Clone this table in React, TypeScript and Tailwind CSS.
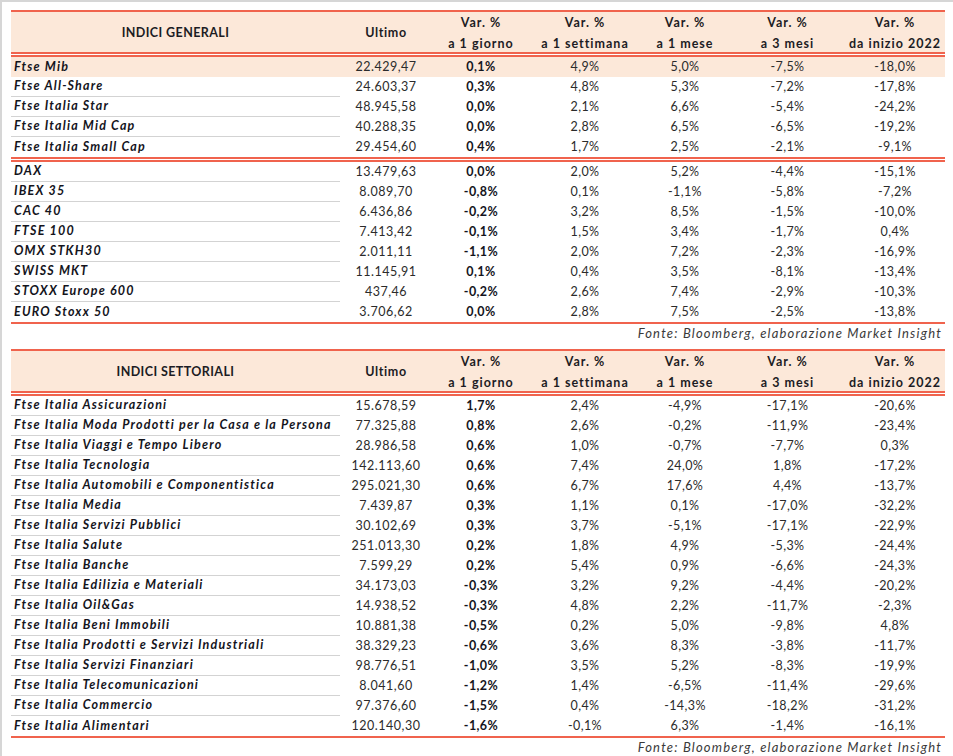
import React from "react";

type Row = [string, string, string, string, string, string, string];

const GENERALI_IT: Row[] = [
  ["Ftse Mib", "22.429,47", "0,1%", "4,9%", "5,0%", "-7,5%", "-18,0%"],
  ["Ftse All-Share", "24.603,37", "0,3%", "4,8%", "5,3%", "-7,2%", "-17,8%"],
  ["Ftse Italia Star", "48.945,58", "0,0%", "2,1%", "6,6%", "-5,4%", "-24,2%"],
  ["Ftse Italia Mid Cap", "40.288,35", "0,0%", "2,8%", "6,5%", "-6,5%", "-19,2%"],
  ["Ftse Italia Small Cap", "29.454,60", "0,4%", "1,7%", "2,5%", "-2,1%", "-9,1%"],
];

const GENERALI_EU: Row[] = [
  ["DAX", "13.479,63", "0,0%", "2,0%", "5,2%", "-4,4%", "-15,1%"],
  ["IBEX 35", "8.089,70", "-0,8%", "0,1%", "-1,1%", "-5,8%", "-7,2%"],
  ["CAC 40", "6.436,86", "-0,2%", "3,2%", "8,5%", "-1,5%", "-10,0%"],
  ["FTSE 100", "7.413,42", "-0,1%", "1,5%", "3,4%", "-1,7%", "0,4%"],
  ["OMX STKH30", "2.011,11", "-1,1%", "2,0%", "7,2%", "-2,3%", "-16,9%"],
  ["SWISS MKT", "11.145,91", "0,1%", "0,4%", "3,5%", "-8,1%", "-13,4%"],
  ["STOXX Europe 600", "437,46", "-0,2%", "2,6%", "7,4%", "-2,9%", "-10,3%"],
  ["EURO Stoxx 50", "3.706,62", "0,0%", "2,8%", "7,5%", "-2,5%", "-13,8%"],
];

const SETTORIALI: Row[] = [
  ["Ftse Italia Assicurazioni", "15.678,59", "1,7%", "2,4%", "-4,9%", "-17,1%", "-20,6%"],
  ["Ftse Italia Moda Prodotti per la Casa e la Persona", "77.325,88", "0,8%", "2,6%", "-0,2%", "-11,9%", "-23,4%"],
  ["Ftse Italia Viaggi e Tempo Libero", "28.986,58", "0,6%", "1,0%", "-0,7%", "-7,7%", "0,3%"],
  ["Ftse Italia Tecnologia", "142.113,60", "0,6%", "7,4%", "24,0%", "1,8%", "-17,2%"],
  ["Ftse Italia Automobili e Componentistica", "295.021,30", "0,6%", "6,7%", "17,6%", "4,4%", "-13,7%"],
  ["Ftse Italia Media", "7.439,87", "0,3%", "1,1%", "0,1%", "-17,0%", "-32,2%"],
  ["Ftse Italia Servizi Pubblici", "30.102,69", "0,3%", "3,7%", "-5,1%", "-17,1%", "-22,9%"],
  ["Ftse Italia Salute", "251.013,30", "0,2%", "1,8%", "4,9%", "-5,3%", "-24,4%"],
  ["Ftse Italia Banche", "7.599,29", "0,2%", "5,4%", "0,9%", "-6,6%", "-24,3%"],
  ["Ftse Italia Edilizia e Materiali", "34.173,03", "-0,3%", "3,2%", "9,2%", "-4,4%", "-20,2%"],
  ["Ftse Italia Oil&Gas", "14.938,52", "-0,3%", "4,8%", "2,2%", "-11,7%", "-2,3%"],
  ["Ftse Italia Beni Immobili", "10.881,38", "-0,5%", "0,2%", "5,0%", "-9,8%", "4,8%"],
  ["Ftse Italia Prodotti e Servizi Industriali", "38.329,23", "-0,6%", "3,6%", "8,3%", "-3,8%", "-11,7%"],
  ["Ftse Italia Servizi Finanziari", "98.776,51", "-1,0%", "3,5%", "5,2%", "-8,3%", "-19,9%"],
  ["Ftse Italia Telecomunicazioni", "8.041,60", "-1,2%", "1,4%", "-6,5%", "-11,4%", "-29,6%"],
  ["Ftse Italia Commercio", "97.376,60", "-1,5%", "0,4%", "-14,3%", "-18,2%", "-31,2%"],
  ["Ftse Italia Alimentari", "120.140,30", "-1,6%", "-0,1%", "6,3%", "-1,4%", "-16,1%"],
];

// column widths taken off the screenshot
const GRID = "grid grid-cols-[329px_92px_98px_110px_90px_115px_100px]";

const RedLine = () => <div className="h-[2px] bg-[#f0634d]" />;

const DoubleLine = () => (
  <div>
    <div className="h-[2px] bg-[#f0634d]" />
    <div className="h-[1px] bg-white" />
    <div className="h-[2px] bg-[#f0634d]" />
  </div>
);

const Header = ({ title }: { title: string }) => (
  <div className={`${GRID} h-[40px] bg-[#fce8d9] font-bold text-[12.5px] text-[#1c1c24] text-center`}>
    <div className="flex items-center justify-center uppercase tracking-[0.4px]">{title}</div>
    <div className="flex items-center justify-center tracking-[0.6px]">Ultimo</div>
    {["a 1 giorno", "a 1 settimana", "a 1 mese", "a 3 mesi", "da inizio 2022"].map((s) => (
      <div key={s} className="flex flex-col justify-center leading-[21px] tracking-[1px]">
        <span>Var. %</span>
        <span>{s}</span>
      </div>
    ))}
  </div>
);

const Rows = ({ rows, highlightFirst }: { rows: Row[]; highlightFirst?: boolean }) => (
  <div>
    {rows.map((r, i) => {
      const hl = highlightFirst && i === 0;
      const last = i === rows.length - 1;
      return (
        <div key={r[0]} className={`${GRID} h-[20px] text-[12.5px] ${hl ? "bg-[#fce8d9]" : ""}`}>
          <div
            className={`pl-[3px] flex items-center font-bold italic tracking-[1.2px] text-[#14141c] ${
              !hl && !last ? "border-b border-[#d3d3d3]" : ""
            }`}
          >
            {r[0]}
          </div>
          <div className="flex items-center justify-center tracking-[0.5px] text-[#2b2b2b]">{r[1]}</div>
          <div className="flex items-center justify-center font-bold tracking-[0.4px] text-[#14141c]">{r[2]}</div>
          {r.slice(3).map((v, j) => (
            <div key={j} className="flex items-center justify-center tracking-[0.4px] text-[#2b2b2b]">
              {v}
            </div>
          ))}
        </div>
      );
    })}
  </div>
);

const Fonte = () => (
  <div className="h-[20px] flex items-center justify-end pr-[3px] italic text-[13px] tracking-[1.2px] text-[#3a3a3a]">
    Fonte: Bloomberg, elaborazione Market Insight
  </div>
);

export default function App() {
  return (
    <div
      className="w-[953px] h-[756px] overflow-hidden bg-white border-l-2 border-t-2 border-[#d6d6d6] pl-[9px] pt-[8px]"
      style={{ fontFamily: "Lato, 'Open Sans', sans-serif" }}
    >
      <div className="w-[934px]">
        <RedLine />
        <Header title="Indici generali" />
        <DoubleLine />
        <Rows rows={GENERALI_IT} highlightFirst />
        <DoubleLine />
        <Rows rows={GENERALI_EU} />
        <RedLine />
        <Fonte />
        <div className="h-[5px]" />
        <RedLine />
        <Header title="Indici settoriali" />
        <DoubleLine />
        <Rows rows={SETTORIALI} />
        <RedLine />
        <Fonte />
      </div>
    </div>
  );
}
